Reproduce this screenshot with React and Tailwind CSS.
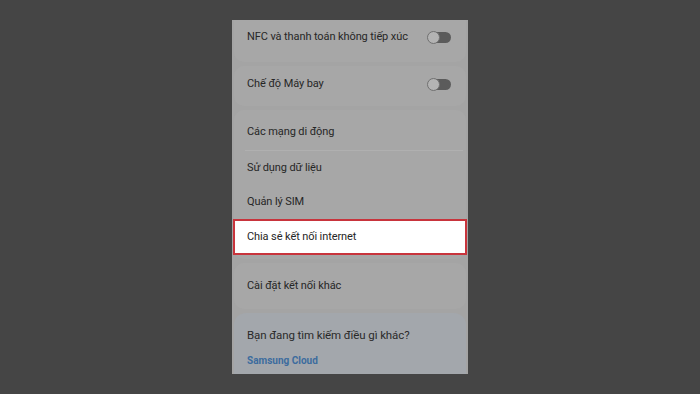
const font = { fontFamily: "Roboto, 'Noto Sans', sans-serif" };

function Toggle() {
  return (
    <div className="relative w-[24px] h-[13px] flex items-center">
      <div className="absolute right-0 h-[11px] w-[20px] rounded-full bg-[#5b5b5b]" />
      <div className="absolute left-0 h-[13px] w-[13px] rounded-full bg-[#b3b3b3] border border-[#707070]" />
    </div>
  );
}

function Row({ label, h, toggle }) {
  return (
    <div className={`flex items-center justify-between pl-[13px] pr-[15px] ${h}`}>
      <span className="text-[11px] text-[#262626] tracking-[-0.1px]">{label}</span>
      {toggle && <Toggle />}
    </div>
  );
}

export default function App() {
  return (
    <div className="w-[700px] h-[394px] bg-[#454545] flex justify-center pt-[20px]" style={font}>
      <div className="w-[236px] h-[354px] bg-[#a4a4a4] overflow-hidden flex flex-col gap-[4px] px-[2px]">
        <div className="h-[42px] bg-[#a7a7a7] rounded-b-[10px]">
          <Row label="NFC và thanh toán không tiếp xúc" h="h-[34px]" toggle />
        </div>
        <div className="h-[40px] bg-[#a7a7a7] rounded-[10px]">
          <Row label="Chế độ Máy bay" h="h-[36px]" toggle />
        </div>
        <div className="bg-[#a7a7a7] rounded-[10px] pt-[4px] pb-[4px]">
          <div className="ml-[11px] mr-[3px] border-b border-[#b0b0b0]">
            <div className="h-[36px] flex items-center pl-[2px]">
              <span className="text-[11px] text-[#262626] tracking-[-0.1px]">Các mạng di động</span>
            </div>
          </div>
          <Row label="Sử dụng dữ liệu" h="h-[35px]" />
          <Row label="Quản lý SIM" h="h-[33px]" />
          <div className="-mx-[1px] h-[36px] bg-white border-2 border-[#c8343c] flex items-center pl-[12px]">
            <span className="text-[11px] text-[#262626] tracking-[-0.1px]">Chia sẻ kết nối internet</span>
          </div>
        </div>
        <div className="h-[46px] bg-[#a7a7a7] rounded-[10px] flex items-center pl-[13px]">
          <span className="text-[11px] text-[#262626] tracking-[-0.1px]">Cài đặt kết nối khác</span>
        </div>
        <div className="flex-1 bg-[#a3a7ac] rounded-t-[12px] pl-[13px] pt-[13px]">
          <div className="text-[11.5px] text-[#2a2a2a] tracking-[-0.1px] leading-[18px]">Bạn đang tìm kiếm điều gì khác?</div>
          <div className="mt-[10px] text-[10px] font-bold text-[#3c6c9e] leading-[14px]">Samsung Cloud</div>
        </div>
      </div>
    </div>
  );
}
